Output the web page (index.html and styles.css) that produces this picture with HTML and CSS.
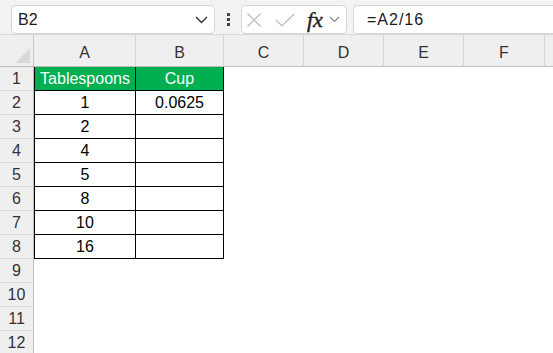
FILE: index.html
```html
<!DOCTYPE html>
<html>
<head>
<meta charset="utf-8">
<link rel="stylesheet" href="styles.css">
</head>
<body>
<div class="app">
  <div class="toolbar">
    <div class="namebox">
      <span class="name">B2</span>
      <svg class="chev" width="13" height="8" viewBox="0 0 13 8"><path d="M1 1 L6.5 6.5 L12 1" fill="none" stroke="#333" stroke-width="1.4"/></svg>
    </div>
    <div class="dots"><i></i><i></i><i></i></div>
    <div class="fnbox">
      <svg class="ix" width="14" height="14" viewBox="0 0 14 14"><path d="M0.5 0.5 L13.5 13.5 M13.5 0.5 L0.5 13.5" stroke="#b8b8b8" stroke-width="1.2" fill="none"/></svg>
      <svg class="ic" width="20" height="14" viewBox="0 0 20 14"><path d="M1 7 L7 13 L19 1" stroke="#b8b8b8" stroke-width="1.2" fill="none"/></svg>
      <span class="fx">fx</span>
      <svg class="id" width="11" height="7" viewBox="0 0 11 7"><path d="M1 1 L5.5 5.5 L10 1" fill="none" stroke="#888" stroke-width="1.2"/></svg>
    </div>
    <div class="formula">=A2/16</div>
  </div>
  <div class="sheet">
    <div class="corner"><span class="tri"></span></div>
    <div class="ch">A</div><div class="ch">B</div><div class="ch">C</div><div class="ch">D</div><div class="ch">E</div><div class="ch">F</div><div class="ch last"></div>

    <div class="rh">1</div><div class="c t ta hd">Tablespoons</div><div class="c t tb hd">Cup</div><div class="c"></div><div class="c"></div><div class="c"></div><div class="c"></div><div class="c"></div>
    <div class="rh">2</div><div class="c t ta">1</div><div class="c t tb">0.0625</div><div class="c"></div><div class="c"></div><div class="c"></div><div class="c"></div><div class="c"></div>
    <div class="rh">3</div><div class="c t ta">2</div><div class="c t tb"></div><div class="c"></div><div class="c"></div><div class="c"></div><div class="c"></div><div class="c"></div>
    <div class="rh">4</div><div class="c t ta">4</div><div class="c t tb"></div><div class="c"></div><div class="c"></div><div class="c"></div><div class="c"></div><div class="c"></div>
    <div class="rh">5</div><div class="c t ta">5</div><div class="c t tb"></div><div class="c"></div><div class="c"></div><div class="c"></div><div class="c"></div><div class="c"></div>
    <div class="rh">6</div><div class="c t ta">8</div><div class="c t tb"></div><div class="c"></div><div class="c"></div><div class="c"></div><div class="c"></div><div class="c"></div>
    <div class="rh">7</div><div class="c t ta">10</div><div class="c t tb"></div><div class="c"></div><div class="c"></div><div class="c"></div><div class="c"></div><div class="c"></div>
    <div class="rh">8</div><div class="c t ta">16</div><div class="c t tb"></div><div class="c"></div><div class="c"></div><div class="c"></div><div class="c"></div><div class="c"></div>
    <div class="rh">9</div><div class="c"></div><div class="c"></div><div class="c"></div><div class="c"></div><div class="c"></div><div class="c"></div><div class="c"></div>
    <div class="rh">10</div><div class="c"></div><div class="c"></div><div class="c"></div><div class="c"></div><div class="c"></div><div class="c"></div><div class="c"></div>
    <div class="rh">11</div><div class="c"></div><div class="c"></div><div class="c"></div><div class="c"></div><div class="c"></div><div class="c"></div><div class="c"></div>
    <div class="rh">12</div><div class="c"></div><div class="c"></div><div class="c"></div><div class="c"></div><div class="c"></div><div class="c"></div><div class="c"></div>
  </div>
</div>
</body>
</html>
```
FILE: styles.css
```css
html, body {
  margin: 0;
  padding: 0;
  background: #ffffff;
  overflow: hidden;
}
.app {
  width: 553px;
  height: 353px;
  overflow: hidden;
  font-family: "Liberation Sans", Arial, sans-serif;
  color: #000;
}
.toolbar {
  background: #f3f3f3;
  border-bottom: 1px solid #d8d8d8;
  display: flex;
  align-items: flex-start;
  padding-top: 5px;
  box-sizing: border-box;
  height: 35px;
}
.namebox {
  margin-left: 11px;
  width: 204px;
  height: 29px;
  box-sizing: border-box;
  background: #fff;
  border: 1px solid #d6d6d6;
  border-radius: 5px;
  display: flex;
  align-items: center;
  justify-content: space-between;
  padding: 0 6px 0 6px;
}
.name {
  font-size: 16px;
  color: #1a1a1a;
}
.dots {
  width: 3px;
  margin-left: 12px;
  margin-top: 8px;
  display: flex;
  flex-direction: column;
  gap: 2px;
}
.dots i {
  display: block;
  width: 3px;
  height: 3px;
  background: #444;
}
.fnbox {
  margin-left: 11px;
  width: 106px;
  height: 29px;
  box-sizing: border-box;
  background: #fff;
  border: 1px solid #d6d6d6;
  border-radius: 5px;
  display: flex;
  align-items: center;
  padding-left: 5px;
}
.ic {
  margin-left: 14px;
}
.fx {
  font-family: "Liberation Serif", "DejaVu Serif", serif;
  font-style: italic;
  font-size: 22px;
  line-height: 22px;
  color: #222;
  margin-left: 12px;
  -webkit-text-stroke: 0.4px #222;
}
.id {
  margin-left: 6px;
}
.formula {
  margin-left: 6px;
  flex: 1;
  height: 29px;
  box-sizing: border-box;
  background: #fff;
  border: 1px solid #d6d6d6;
  border-right: none;
  border-radius: 5px 0 0 5px;
  font-size: 16px;
  letter-spacing: 1px;
  line-height: 27px;
  padding-left: 13px;
  color: #1a1a1a;
}
.sheet {
  display: grid;
  grid-template-columns: 34px 102px 88px 80px 80px 80px 81px 8px;
  grid-template-rows: 32px repeat(12, 24px);
  font-size: 16px;
}
.corner {
  background: #efefef;
  border-right: 1px solid #c9c9c9;
  border-bottom: 1px solid #bdbdbd;
  position: relative;
}
.tri {
  position: absolute;
  right: 3px;
  bottom: 3px;
  width: 0;
  height: 0;
  border-left: 15px solid transparent;
  border-bottom: 15px solid #d9d9d9;
}
.ch {
  background: #efefef;
  border-right: 1px solid #d6d6d6;
  border-bottom: 1px solid #bdbdbd;
  display: flex;
  align-items: center;
  justify-content: center;
  color: #333;
  padding-top: 4px;
  box-sizing: border-box;
}
.ch.last {
  border-right: none;
}
.rh {
  background: #efefef;
  border-right: 1px solid #bdbdbd;
  border-bottom: 1px solid #dadada;
  display: flex;
  align-items: center;
  justify-content: center;
  color: #333;
  font-size: 16px;
}
.c {
  box-sizing: border-box;
  display: flex;
  align-items: center;
  justify-content: center;
}
.t {
  border-bottom: 1px solid #000;
  border-right: 1px solid #000;
}
.ta {
  border-left: 1px solid #000;
}
.hd {
  background: #00b050;
  color: #fff;
}
```
